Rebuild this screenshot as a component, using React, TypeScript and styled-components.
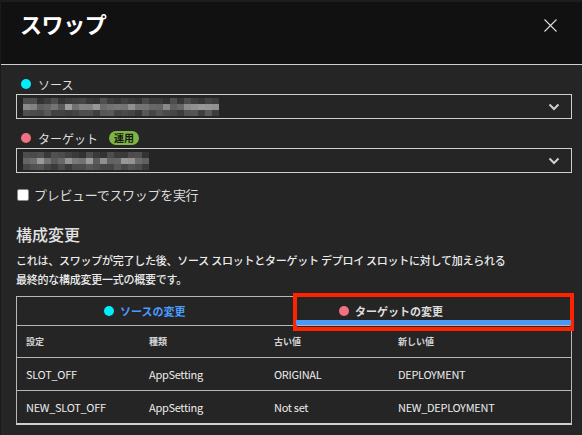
import React, { FC } from 'react'
import styled, { createGlobalStyle } from 'styled-components'

const GlobalStyle = createGlobalStyle`
  html, body {
    margin: 0;
    padding: 0;
    background: #252525;
  }
  body {
    font-family: 'Noto Sans CJK JP', 'Noto Sans', sans-serif;
    color: #e4e4e4;
  }
`

type Change = {
  name: string
  kind: string
  oldValue: string
  newValue: string
}

const changes: Change[] = [
  { name: 'SLOT_OFF', kind: 'AppSetting', oldValue: 'ORIGINAL', newValue: 'DEPLOYMENT' },
  { name: 'NEW_SLOT_OFF', kind: 'AppSetting', oldValue: 'Not set', newValue: 'NEW_DEPLOYMENT' },
]

// pixelated placeholder for the blurred slot names
const Mosaic: FC<{ cols: number; seed: number }> = ({ cols, seed }) => {
  const cells: React.ReactNode[] = []
  let s = seed
  const rand = () => {
    s = (s * 9301 + 49297) % 233280
    return s / 233280
  }
  const rowBase = [0x30, 0x58, 0x38]
  for (let r = 0; r < 3; r++) {
    for (let c = 0; c < cols; c++) {
      const v = Math.round(rowBase[r] + rand() * (r === 1 ? 70 : 34))
      const hex = v.toString(16).padStart(2, '0')
      cells.push(
        <rect key={`${r}-${c}`} x={c * 7} y={r * 6} width={7} height={6} fill={`#${hex}${hex}${hex}`} />
      )
    }
  }
  return (
    <svg width={cols * 7} height={18} viewBox={`0 0 ${cols * 7} 18`}>
      {cells}
    </svg>
  )
}

const Chevron = () => (
  <svg width='12' height='8' viewBox='0 0 12 8'>
    <path d='M1.5 1.5 L6 6 L10.5 1.5' fill='none' stroke='#d0d0d0' strokeWidth='2' />
  </svg>
)

const CloseIcon = () => (
  <svg width='13' height='13' viewBox='0 0 13 13'>
    <path d='M0.5 0.5 L12.5 12.5 M12.5 0.5 L0.5 12.5' stroke='#dcdcdc' strokeWidth='1.1' />
  </svg>
)

const App: FC = () => {
  return (
    <Panel>
      <GlobalStyle />
      <Header>
        <Title>スワップ</Title>
        <CloseButton>
          <CloseIcon />
        </CloseButton>
      </Header>
      <Body>
        <Label>
          <Dot $color='#00eefc' />
          ソース
        </Label>
        <Select>
          <Mosaic cols={28} seed={17} />
          <Chevron />
        </Select>
        <Label>
          <Dot $color='#f27083' />
          ターゲット
          <Badge>運用</Badge>
        </Label>
        <Select>
          <Mosaic cols={18} seed={91} />
          <Chevron />
        </Select>
        <CheckRow>
          <CheckBox />
          プレビューでスワップを実行
        </CheckRow>
        <Heading>構成変更</Heading>
        <Description>
          これは、スワップが完了した後、ソース スロットとターゲット デプロイ スロットに対して加えられる
          <br />
          最終的な構成変更一式の概要です。
        </Description>
        <Table>
          <Tabs>
            <Tab $offset={87} $color='#4a9cff'>
              <Dot $color='#00eefc' />
              ソースの変更
            </Tab>
            <Tab $offset={44} $color='#dedede' $active>
              <Dot $color='#f27083' />
              ターゲットの変更
              <Highlight />
            </Tab>
          </Tabs>
          <Row $head>
            <Cell $head>設定</Cell>
            <Cell $head>種類</Cell>
            <Cell $head>古い値</Cell>
            <Cell $head>新しい値</Cell>
          </Row>
          {changes.map((c) => (
            <Row key={c.name}>
              <Cell>{c.name}</Cell>
              <Cell>{c.kind}</Cell>
              <Cell>{c.oldValue}</Cell>
              <Cell>{c.newValue}</Cell>
            </Row>
          ))}
        </Table>
      </Body>
    </Panel>
  )
}

const Panel = styled.div`
  width: 582px;
  height: 435px;
  box-sizing: border-box;
  border-left: 1px solid #1a1a1a;
  background: #252525;
  overflow: hidden;
`

const Header = styled.div`
  height: 65px;
  box-sizing: border-box;
  background: #111111;
  border-top: 2px solid #1d1d1d;
  border-bottom: 1px solid #cfcfcf;
  display: flex;
  align-items: flex-start;
  justify-content: space-between;
  padding: 4px 25px 0 19px;
`

const Title = styled.h1`
  margin: 0;
  font-size: 22px;
  line-height: 34px;
  font-weight: 700;
  color: #ffffff;
  letter-spacing: -0.4px;
`

const CloseButton = styled.div`
  display: flex;
  padding-top: 13px;
`

const Body = styled.div`
  padding: 10px 10px 0 15px;
  display: flex;
  flex-direction: column;
`

const Label = styled.div`
  display: flex;
  align-items: center;
  gap: 7px;
  height: 18px;
  padding-left: 5px;
  font-size: 12px;
  color: #dedede;
`

const Dot = styled.span<{ $color: string }>`
  width: 10px;
  height: 10px;
  border-radius: 50%;
  background: ${(p) => p.$color};
  flex: none;
`

const Badge = styled.span`
  margin-left: 4px;
  padding: 0 5px;
  height: 14px;
  line-height: 14px;
  border-radius: 7px;
  background: #7db442;
  color: #161616;
  font-size: 10px;
  font-weight: 700;
`

const Select = styled.div`
  margin: 1px 0 10px;
  width: 556px;
  height: 25px;
  box-sizing: border-box;
  border: 1px solid #cfcfcf;
  display: flex;
  align-items: center;
  justify-content: space-between;
  padding: 0 11px 0 6px;
`

const CheckRow = styled.label`
  display: flex;
  align-items: center;
  gap: 5px;
  height: 19px;
  margin-top: 2px;
  padding-left: 1px;
  font-size: 13px;
  letter-spacing: -0.3px;
  color: #dcdcdc;
`

const CheckBox = styled.span`
  width: 12px;
  height: 12px;
  border-radius: 2px;
  background: #ffffff;
  border: 1px solid #8a8a8a;
  box-sizing: border-box;
`

const Heading = styled.h2`
  margin: 17px 0 0;
  height: 26px;
  font-size: 16px;
  line-height: 26px;
  font-weight: 500;
  color: #e2e2e2;
`

const Description = styled.p`
  margin: 4px 0 0;
  font-size: 11px;
  line-height: 19px;
  font-weight: 500;
  letter-spacing: -0.25px;
  color: #ececec;
  white-space: nowrap;
`

const Table = styled.div`
  margin-top: 7px;
  width: 556px;
  box-sizing: border-box;
  border: 1px solid #b8b8b8;
  border-bottom: 2px solid #cfcfcf;
`

const Tabs = styled.div`
  display: grid;
  grid-template-columns: 276px 1fr;
  height: 28px;
  border-bottom: 1px solid #b8b8b8;
`

const Tab = styled.div<{ $offset: number; $color: string; $active?: boolean }>`
  position: relative;
  display: flex;
  align-items: center;
  gap: 6px;
  padding-left: ${(p) => p.$offset}px;
  font-size: 11px;
  font-weight: 700;
  color: ${(p) => p.$color};
  ${(p) =>
    p.$active &&
    `
    border-left: 2px dashed #19b2ec;
    &::after {
      content: '';
      position: absolute;
      left: 1px;
      right: 0;
      bottom: 0;
      height: 5px;
      background: #4b98f5;
    }
  `}
`

const Highlight = styled.span`
  position: absolute;
  left: -2px;
  top: -4px;
  right: -3px;
  bottom: -6px;
  border: 4px solid #ff2300;
  pointer-events: none;
`

const Row = styled.div<{ $head?: boolean }>`
  display: grid;
  grid-template-columns: 123px 125px 124px 1fr;
  height: ${(p) => (p.$head ? 31 : 32)}px;
  border-top: ${(p) => (p.$head ? 'none' : '1px solid #b8b8b8')};
  align-items: center;
`

const Cell = styled.div<{ $head?: boolean }>`
  padding-left: 9px;
  font-size: ${(p) => (p.$head ? 9 : 11)}px;
  font-weight: ${(p) => (p.$head ? 700 : 400)};
  letter-spacing: ${(p) => (p.$head ? 0 : -0.3)}px;
  color: ${(p) => (p.$head ? '#d4d4d4' : '#ececec')};
`

export default App
